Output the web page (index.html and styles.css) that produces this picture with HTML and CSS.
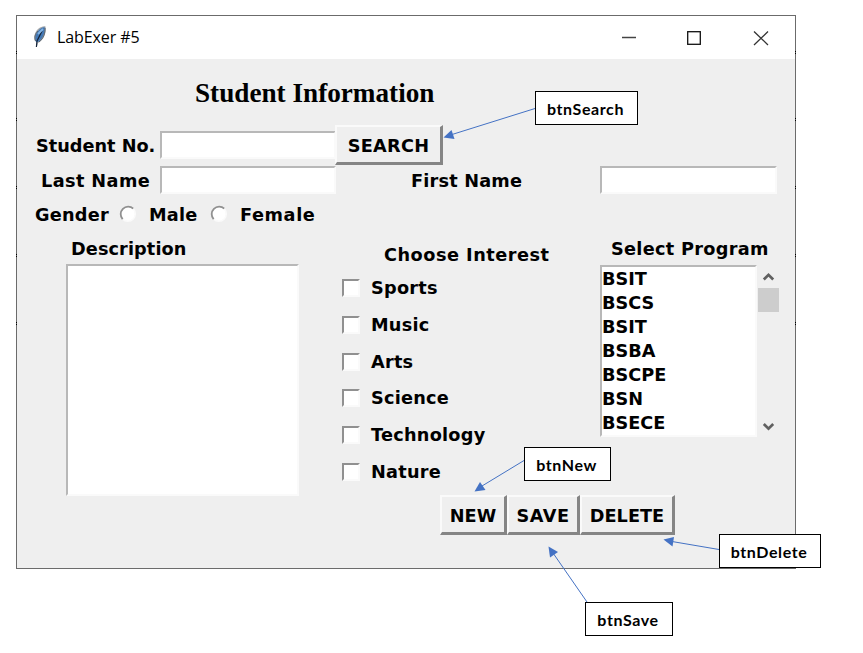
FILE: index.html
```html
<!DOCTYPE html>
<html lang="en">
<head>
<meta charset="utf-8">
<title>LabExer #5</title>
<link rel="stylesheet" href="styles.css">
</head>
<body>
<main class="window">
  <header class="titlebar">
    <svg class="feather" width="16" height="24" viewBox="0 0 16 24">
      <path d="M4 22 L4.500 17 C1 14 2 8 6 4 C9 1.500 12 .8 13.500 1.500 C14.500 8 12 15 6 18 L4.800 22Z" fill="#a3a7ab"/>
      <path d="M4 17 C2 13 4 8 7 5 C9 3 11 2 12.700 2.300 C13.200 8 10.500 14 6 17Z" fill="#4379b6"/>
      <path d="M6 6 C3 9 2 13 3.500 16 M13 3 C13.500 8 11 14 7 17" fill="none" stroke="#59636f" stroke-width="1"/>
      <path d="M4.400 22 L5 16 L10 6" fill="none" stroke="#15243a" stroke-width="1.200"/>
      <path d="M6 9 L11 4" stroke="#84b4e3" stroke-width="1.800"/>
    </svg>
    <span class="caption">LabExer #5</span>
    <svg class="controls" width="148" height="16" viewBox="0 0 148 16">
      <path d="M1 7.500H15" stroke="#444" stroke-width="1.500"/>
      <rect x="66.700" y="1.700" width="12.600" height="12.600" fill="none" stroke="#111" stroke-width="1.300"/>
      <path d="M133 1.500L147 15M147 1.500L133 15" stroke="#333" stroke-width="1.300"/>
    </svg>
  </header>
  <h1>Student Information</h1>
  <div class="row row-number">
    <label class="number-label">Student No.</label><span class="field"></span><button class="search">SEARCH</button>
  </div>
  <div class="row row-name">
    <label class="last-label">Last Name</label><span class="field"></span>
    <label class="first-label">First Name</label><span class="field first"></span>
  </div>
  <div class="row row-gender">
    <label class="gender-label">Gender</label>
    <svg class="radio" width="18" height="18" viewBox="0 0 18 18"><circle cx="9" cy="9" r="7" fill="#fff"/><path d="M3.700 14.300A7.500 7.500 0 0 1 14.300 3.700" fill="none" stroke="#909090" stroke-width="1.800"/><path d="M14.300 3.700A7.500 7.500 0 0 1 3.700 14.300" fill="none" stroke="#fafafa" stroke-width="1.500"/></svg>
    <label class="male-label">Male</label>
    <svg class="radio" width="18" height="18" viewBox="0 0 18 18"><circle cx="9" cy="9" r="7" fill="#fff"/><path d="M3.700 14.300A7.500 7.500 0 0 1 14.300 3.700" fill="none" stroke="#909090" stroke-width="1.800"/><path d="M14.300 3.700A7.500 7.500 0 0 1 3.700 14.300" fill="none" stroke="#fafafa" stroke-width="1.500"/></svg>
    <label class="female-label">Female</label>
  </div>
  <div class="columns">
    <section class="description">
      <h2>Description</h2>
      <div class="textarea"></div>
    </section>
    <section class="interests">
      <h2>Choose Interest</h2>
      <div class="check"><i></i>Sports</div>
      <div class="check"><i></i>Music</div>
      <div class="check"><i></i>Arts</div>
      <div class="check"><i></i>Science</div>
      <div class="check"><i></i>Technology</div>
      <div class="check"><i></i>Nature</div>
    </section>
    <section class="programs">
      <h2>Select Program</h2>
      <div class="listwrap">
        <ul class="list"><li>BSIT</li><li>BSCS</li><li>BSIT</li><li>BSBA</li><li>BSCPE</li><li>BSN</li><li>BSECE</li></ul>
        <div class="scrollbar">
          <svg width="21" height="23" viewBox="0 0 21 23"><path d="M5.800 14.500L10.500 9.800L15.200 14.500" fill="none" stroke="#606060" stroke-width="2.700"/></svg>
          <div class="thumb"></div>
          <svg class="down" width="21" height="23" viewBox="0 0 21 23"><path d="M5.800 10L10.500 14.700L15.200 10" fill="none" stroke="#606060" stroke-width="2.700"/></svg>
        </div>
      </div>
    </section>
  </div>
  <div class="actions"><button class="new">NEW</button><button class="save">SAVE</button><button class="delete">DELETE</button></div>
</main>
<svg class="arrows" width="863" height="653" viewBox="0 0 863 653">
  <path d="M16.500 51v3M16.500 118v3M16.500 186v3M16.500 254v3M16.500 322v3M795.500 51v3M795.500 118v3M795.500 186v3M795.500 254v3M795.500 322v3" stroke="#000" stroke-dasharray="1 1"/>
  <g stroke="#4472c4" stroke-width="1" fill="none">
    <path d="M535 108.500L452 134.500M524 460.500L482 486M719 549.500L672 541.500M587 602L553 553"/>
  </g>
  <g fill="#4472c4">
    <path d="M443.500 137.500L451.500 130L454.500 139Z"/>
    <path d="M474.500 491.500L480 482L485.500 490Z"/>
    <path d="M663.500 539.500L674 537L672.500 546.500Z"/>
    <path d="M548.500 546.500L558 552L550 557.500Z"/>
  </g>
</svg>
<div class="callout c-search">btnSearch</div>
<div class="callout c-new">btnNew</div>
<div class="callout c-delete">btnDelete</div>
<div class="callout c-save">btnSave</div>
</body>
</html>
```
FILE: styles.css
```css
* { box-sizing: border-box; }
body {
  margin: 0;
  padding: 15px 0 0 16px;
  height: 653px;
  overflow: hidden;
  background: #fff;
  color: #000;
  font: bold 17.7px/24px "DejaVu Sans", Verdana, sans-serif;
}
.window {
  width: 780px;
  height: 554px;
  border: 1px solid #6b6b6b;
  background: #efefef;
}
.titlebar {
  height: 43px;
  background: #fff;
  display: flex;
  align-items: center;
  padding-left: 15px;
}
.feather { margin-top: -2px; }
.caption {
  margin: -2px 0 0 9px;
  font: 16px/24px "Open Sans", sans-serif;
  letter-spacing: -0.1px;
}
.controls { margin: 0 26px 0 auto; }
h1 {
  margin: 0;
  padding: 18px 0 0 178px;
  height: 66px;
  font: bold 27.2px/32px "Liberation Serif", serif;
}
h2, label { margin: 0; font: inherit; white-space: nowrap; }
.row { display: flex; align-items: center; }
.row label { padding-top: 2px; }
.row-number { height: 40px; padding-left: 19px; }
.number-label { width: 124px; }
.field {
  width: 176px;
  height: 28px;
  background: #fff;
  border: 2px solid #fafafa;
  border-top-color: #b8b8b8;
  border-left-color: #b8b8b8;
}
button {
  height: 40px;
  padding: 2px 0 0;
  border: 3px solid #858585;
  border-top: 2px solid #fafafa;
  border-left: 2px solid #fafafa;
  background: #efefef;
  color: #000;
  font: inherit;
  line-height: 32px;
}
.search { width: 108px; margin-left: -1px; letter-spacing: 0.3px; }
.row-name { height: 30px; padding-left: 24px; }
.last-label { width: 119px; letter-spacing: 0.4px; }
.first-label { width: 189px; margin-left: 75px; letter-spacing: 0.2px; }
.first { width: 177px; }
.row-gender { height: 36px; padding-left: 18px; letter-spacing: 0.25px; }
.row-gender label { padding-top: 4px; }
.radio { margin-top: 1px; }
.gender-label { width: 84px; }
.male-label { width: 61px; margin-left: 12px; }
.female-label { margin-left: 12px; letter-spacing: 0.6px; }
.columns { display: flex; height: 264px; padding-left: 49px; }
.description { width: 233px; padding-top: 6px; }
.description h2 { padding-left: 5px; letter-spacing: 0.1px; }
.textarea {
  margin-top: 3px;
  height: 232px;
  border: 2px solid #fafafa;
  border-top-color: #b8b8b8;
  border-left-color: #b8b8b8;
  background: #fff;
}
.interests { width: 258px; margin-left: 43px; padding-top: 13px; letter-spacing: 0.25px; }
.interests h2 { height: 26px; line-height: 22px; padding-left: 42px; letter-spacing: 0.5px; }
.check { display: flex; align-items: center; height: 36.7px; }
.check i {
  width: 18px;
  height: 18px;
  margin-right: 11px;
  background: #fff;
  border: 2px solid #fafafa;
  border-top-color: #909090;
  border-left-color: #909090;
}
.programs { width: 180px; padding-top: 6px; }
.programs h2 { padding-left: 11px; letter-spacing: 0.3px; }
.listwrap { display: flex; margin-top: 4px; }
.list {
  width: 157px;
  height: 172px;
  margin: 0;
  padding: 0;
  list-style: none;
  background: #fff;
  border: 2px solid #fafafa;
  border-top-color: #b8b8b8;
  border-left-color: #b8b8b8;
}
.scrollbar { width: 21px; height: 172px; margin-left: 1px; display: flex; flex-direction: column; }
.thumb { height: 24px; background: #cdcdcd; }
.down { margin-top: auto; }
.actions { display: flex; padding-left: 423px; }
.new { width: 67px; }
.save { width: 73px; letter-spacing: 0.5px; }
.delete { width: 95px; }
.arrows { position: absolute; left: 0; top: 0; }
.callout {
  position: absolute;
  height: 34px;
  border: 1.5px solid #000;
  background: #fff;
  padding-right: 2px;
  text-align: center;
  font: bold 16px/34px Lato, sans-serif;
  letter-spacing: 0.6px;
}
.c-search { left: 535px; top: 91px; width: 103px; }
.c-new { left: 524px; top: 447px; width: 87px; }
.c-delete { left: 719px; top: 534px; width: 102px; }
.c-save { left: 585px; top: 602px; width: 88px; }
```
